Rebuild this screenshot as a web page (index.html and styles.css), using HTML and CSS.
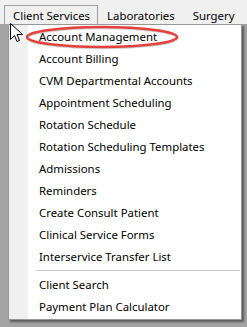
FILE: index.html
```html
<!DOCTYPE html>
<html lang="en">
<head>
    <meta charset="UTF-8">
    <title>Client Services Menu</title>
    <link rel="stylesheet" href="styles.css">
</head>
<body>
    <div class="menubar">
        <div class="menu-item open">Client Services</div>
        <div class="menu-item">Laboratories</div>
        <div class="menu-item">Surgery</div>
    </div>

    <div class="workspace">
        <ul class="dropdown">
            <li>Account Management</li>
            <li>Account Billing</li>
            <li>CVM Departmental Accounts</li>
            <li>Appointment Scheduling</li>
            <li>Rotation Schedule</li>
            <li>Rotation Scheduling Templates</li>
            <li>Admissions</li>
            <li>Reminders</li>
            <li>Create Consult Patient</li>
            <li>Clinical Service Forms</li>
            <li>Interservice Transfer List</li>
            <li class="separator"></li>
            <li>Client Search</li>
            <li>Payment Plan Calculator</li>
        </ul>
    </div>

    <!-- annotation drawn over the screenshot -->
    <svg class="highlight" width="247" height="327" viewBox="0 0 247 327">
        <ellipse cx="102.5" cy="38" rx="75" ry="10" fill="none" stroke="rgba(0,0,0,0.18)" stroke-width="2.5"/>
        <ellipse cx="102" cy="37" rx="75" ry="10" fill="none" stroke="#e5403c" stroke-width="2.5"/>
    </svg>

    <svg class="cursor" width="14" height="20" viewBox="0 0 14 20">
        <path d="M0.5 0.5 V16.5 L4.5 12.5 L7 18.5 L9.5 17.5 L7 11.5 H12.5 Z" fill="#fff" stroke="#000" stroke-width="1" stroke-linejoin="miter"/>
    </svg>
</body>
</html>
```

FILE: styles.css
```css
body {
    margin: 0;
    width: 247px;
    height: 327px;
    overflow: hidden;
    background-color: #a3a3a3;
    font-family: "Noto Sans", "Open Sans", sans-serif;
    font-size: 11.4px;
    color: #000;
    position: relative;
}
.menubar {
    display: flex;
    height: 24px;
    padding-left: 4px;
    background-color: #f0f0f0;
}
.menu-item {
    padding: 0 8px;
    line-height: 20px;
    margin-top: 5px;
    border: 1px solid transparent;
    border-bottom: none;
    white-space: nowrap;
}
.menu-item.open {
    padding: 0 7px 0 8px;
    border-color: #a0a0a0;
    background-color: #f0f0f0;
}
.workspace {
    padding-left: 8px;
}
.dropdown {
    list-style: none;
    margin: 0;
    padding: 1px 0 1px;
    width: 232px;
    border: 1px solid #979797;
    background: linear-gradient(to right, #f0f0f0 19px, #fff 19px);
    box-shadow: 2px 2px 2px rgba(0, 0, 0, 0.45);
}
.dropdown li {
    height: 22px;
    line-height: 22px;
    padding-left: 30px;
    white-space: nowrap;
}
.dropdown li.separator {
    height: 6px;
    padding: 0;
    margin-left: 27px;
    margin-right: 1px;
    background: linear-gradient(#fff 2px, #c8c8c8 2px, #c8c8c8 3px, #fff 3px);
}
.highlight {
    position: absolute;
    left: 0;
    top: 0;
    pointer-events: none;
}
.cursor {
    position: absolute;
    left: 10px;
    top: 23px;
}
```
